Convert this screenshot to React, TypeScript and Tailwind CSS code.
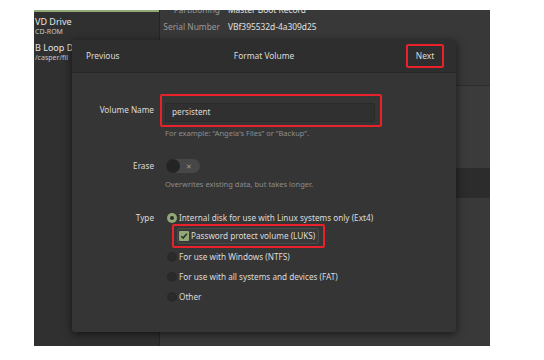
import React from "react";

const font = { fontFamily: '"Noto Sans", "Open Sans", sans-serif' };

function Radio({ selected }: { selected?: boolean }) {
  if (selected) {
    return (
      <span className="flex h-[10px] w-[10px] items-center justify-center rounded-full bg-[#8fa876]">
        <span className="h-[4px] w-[4px] rounded-full bg-[#2b2b2b]" />
      </span>
    );
  }
  return <span className="h-[10px] w-[10px] rounded-full bg-[#2a2a2a]" />;
}

export default function App() {
  return (
    <div className="h-[360px] w-[544px] bg-white pl-[34px] pt-[10px]" style={font}>
      <div className="relative flex h-[336px] w-[456px] overflow-hidden bg-[#383838]">
        {/* Sidebar */}
        <div className="flex w-[126px] flex-col overflow-hidden border-r border-[#262626] bg-[#303030]">
          <div className="h-[2px] bg-[#93aa78]" />
          <div className="ml-[1px] mt-[4px] whitespace-nowrap">
            <div className="text-[9px] leading-[11px] text-[#e4e4e4]">VD Drive</div>
            <div className="text-[7px] leading-[9px] text-[#c8c8c8]">CD-ROM</div>
          </div>
          <div className="ml-[1px] mt-[6px] whitespace-nowrap">
            <div className="text-[9px] leading-[11px] text-[#e4e4e4]">B Loop De</div>
            <div className="text-[7px] leading-[9px] text-[#c8c8c8]">/casper/fil</div>
          </div>
        </div>
        {/* Right pane */}
        <div className="flex flex-1 flex-col overflow-hidden">
          <div className="mt-[-6px] grid grid-cols-[60px_1fr] gap-x-[8px] gap-y-[6px] text-[8.4px] leading-[11px]">
            <div className="whitespace-nowrap text-right text-[#9a9a9a]">Partitioning</div>
            <div className="whitespace-nowrap text-[#e0e0e0]">Master Boot Record</div>
            <div className="whitespace-nowrap text-right text-[#9a9a9a]">Serial Number</div>
            <div className="whitespace-nowrap text-[#e0e0e0]">VBf395532d-4a309d25</div>
          </div>
          <div className="mt-[53px] h-[83px] border-t border-[#2c2c2c] bg-[#3b3b3b]" />
          <div className="h-[30px] bg-[#2c2c2c]" />
          <div className="flex-1 bg-[#393939]" />
        </div>

        {/* Dialog */}
        <div className="absolute left-[38px] top-[30px] flex h-[292px] w-[384px] flex-col overflow-hidden rounded-[3px] bg-[#353535] shadow-[0_2px_10px_rgba(0,0,0,0.6)]">
          <div className="relative flex h-[33px] items-center border-b border-[#282828] bg-[#2e2e2e] px-[14px] text-[8.4px] text-[#dcdcdc]">
            <span>Previous</span>
            <span className="absolute left-1/2 -translate-x-1/2 whitespace-nowrap">Format Volume</span>
            <span className="absolute left-[334px] top-[4px] flex h-[24px] w-[38px] items-center justify-center rounded-[2px] border-2 border-[#e8212b]">
              Next
            </span>
          </div>
          <div className="flex flex-col pt-[21px] text-[8.2px] text-[#dcdcdc]">
            {/* Volume Name */}
            <div className="flex items-center">
              <div className="w-[82px] text-right">Volume Name</div>
              <div className="ml-[6px] h-[33px] w-[222px] rounded-[2px] border-2 border-[#e8212b] pl-[3px] pr-[5px] pt-[7px]">
                <div className="flex h-[19px] w-[210px] items-center rounded-[2px] border border-[#2a2a2a] bg-[#303030] px-[6px]">
                  persistent
                </div>
              </div>
            </div>
            <div className="ml-[93px] mt-[1px] text-[7.5px] leading-[11px] text-[#8d8d8d]">
              For example: “Angela's Files” or “Backup”.
            </div>
            {/* Erase */}
            <div className="mt-[20px] flex h-[14px] items-center">
              <div className="w-[82px] text-right">Erase</div>
              <div className="ml-[12px] flex h-[14px] w-[34px] items-center rounded-full bg-[#474747]">
                <span className="h-[14px] w-[14px] rounded-full bg-[#242424]" />
                <span className="ml-[6px] text-[7px] leading-none text-[#9a9a9a]">✕</span>
              </div>
            </div>
            <div className="ml-[93px] mt-[6px] text-[7.5px] leading-[11px] text-[#8d8d8d]">
              Overwrites existing data, but takes longer.
            </div>
            {/* Type */}
            <div className="mt-[22px] flex h-[12px] items-center">
              <div className="w-[82px] text-right">Type</div>
              <div className="ml-[13px] flex items-center gap-[2px]">
                <Radio selected />
                <span>Internal disk for use with Linux systems only (Ext4)</span>
              </div>
            </div>
            <div className="ml-[100px] flex h-[24px] w-[153px] items-center rounded-[2px] border-2 border-[#e8212b] pl-[3px]">
              <div className="flex h-[16px] w-[142px] items-center gap-[2px] rounded-[2px] border border-[#4a4a4a] bg-[#393939] pl-[1px]">
                <span className="flex h-[10px] w-[10px] items-center justify-center rounded-[1px] bg-[#8fa876]">
                  <svg width="8" height="8" viewBox="0 0 8 8">
                    <path d="M1.3 4.2 L3.2 6 L6.8 1.8" fill="none" stroke="#262626" strokeWidth="1.4" />
                  </svg>
                </span>
                <span className="whitespace-nowrap">Password protect volume (LUKS)</span>
              </div>
            </div>
            <div className="ml-[95px] mt-[3px] flex flex-col gap-[8px]">
              <div className="flex h-[12px] items-center gap-[2px]">
                <Radio />
                <span>For use with Windows (NTFS)</span>
              </div>
              <div className="flex h-[12px] items-center gap-[2px]">
                <Radio />
                <span>For use with all systems and devices (FAT)</span>
              </div>
              <div className="flex h-[12px] items-center gap-[2px]">
                <Radio />
                <span>Other</span>
              </div>
            </div>
          </div>
        </div>
      </div>
    </div>
  );
}
